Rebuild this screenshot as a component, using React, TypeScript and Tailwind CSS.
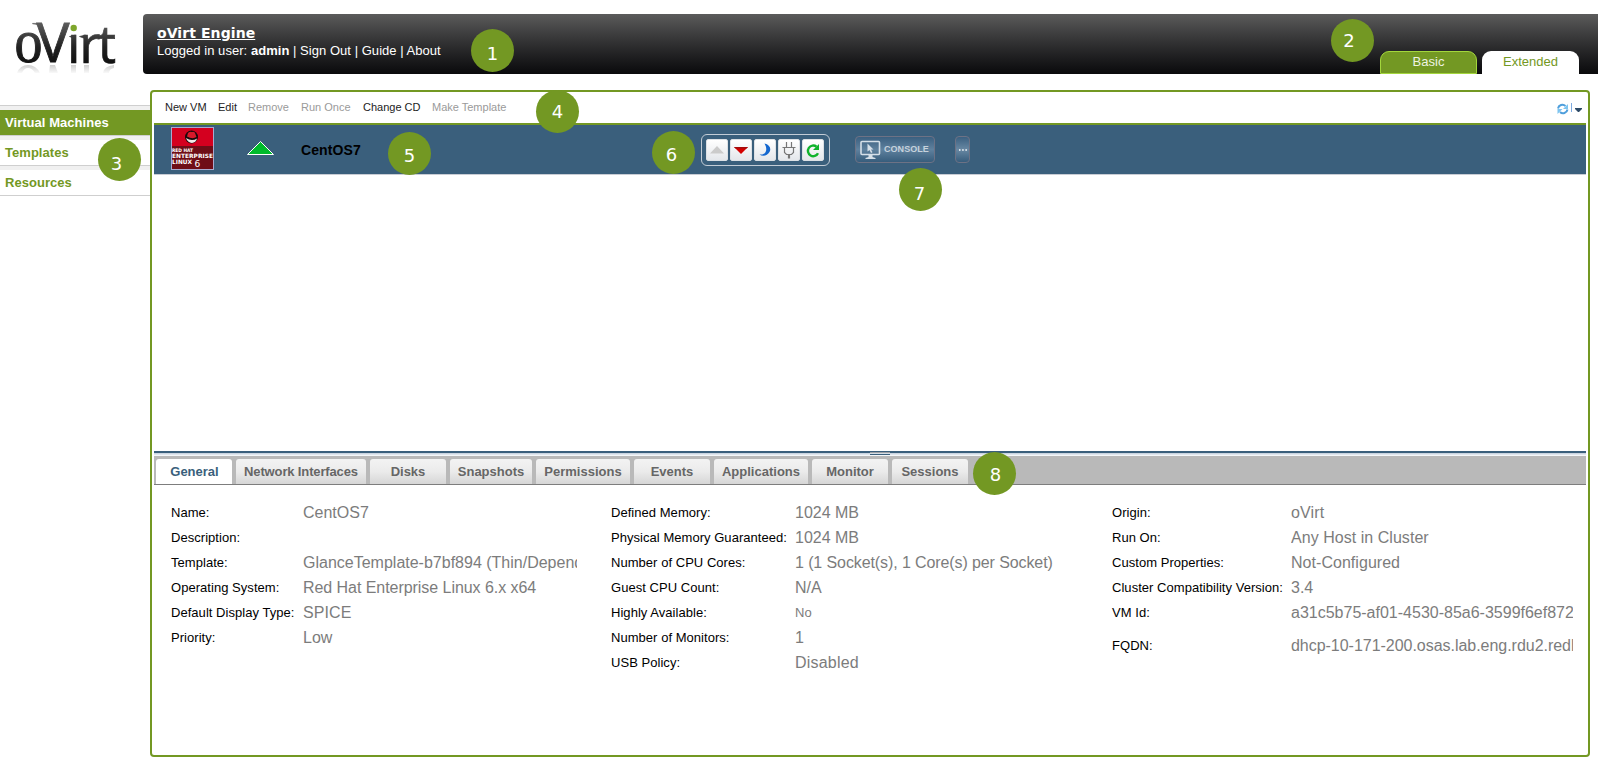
import type { ReactNode } from "react";

const menu: { label: string; enabled: boolean; width: string }[] = [
  { label: "New VM", enabled: true, width: "w-[53px]" },
  { label: "Edit", enabled: true, width: "w-[30px]" },
  { label: "Remove", enabled: false, width: "w-[53px]" },
  { label: "Run Once", enabled: false, width: "w-[62px]" },
  { label: "Change CD", enabled: true, width: "w-[69px]" },
  { label: "Make Template", enabled: false, width: "w-[90px]" },
];

const tabs: { label: string; width: string }[] = [
  { label: "General", width: "w-[76px]" },
  { label: "Network Interfaces", width: "w-[130px] tracking-[-0.14px]" },
  { label: "Disks", width: "w-[76px]" },
  { label: "Snapshots", width: "w-[82px]" },
  { label: "Permissions", width: "w-[94px]" },
  { label: "Events", width: "w-[76px]" },
  { label: "Applications", width: "w-[94px]" },
  { label: "Monitor", width: "w-[76px]" },
  { label: "Sessions", width: "w-[76px]" },
];

type Row = { label: string; value: string; small?: boolean; gap?: boolean; spacing?: string };

const general: Row[] = [
  { label: "Name:", value: "CentOS7" },
  { label: "Description:", value: "" },
  { label: "Template:", value: "GlanceTemplate-b7bf894 (Thin/Dependent)" },
  { label: "Operating System:", value: "Red Hat Enterprise Linux 6.x x64", spacing: "tracking-[-0.05px]" },
  { label: "Default Display Type:", value: "SPICE", spacing: "tracking-[0.1px]" },
  { label: "Priority:", value: "Low" },
];

const hardware: Row[] = [
  { label: "Defined Memory:", value: "1024 MB" },
  { label: "Physical Memory Guaranteed:", value: "1024 MB" },
  { label: "Number of CPU Cores:", value: "1 (1 Socket(s), 1 Core(s) per Socket)", spacing: "tracking-[-0.1px]" },
  { label: "Guest CPU Count:", value: "N/A" },
  { label: "Highly Available:", value: "No", small: true },
  { label: "Number of Monitors:", value: "1" },
  { label: "USB Policy:", value: "Disabled", spacing: "tracking-[0.2px]" },
];

const placement: Row[] = [
  { label: "Origin:", value: "oVirt", spacing: "tracking-[0.15px]" },
  { label: "Run On:", value: "Any Host in Cluster", spacing: "tracking-[0.04px]" },
  { label: "Custom Properties:", value: "Not-Configured", spacing: "tracking-[0.04px]" },
  { label: "Cluster Compatibility Version:", value: "3.4" },
  { label: "VM Id:", value: "a31c5b75-af01-4530-85a6-3599f6ef872" },
  { label: "FQDN:", value: "dhcp-10-171-200.osas.lab.eng.rdu2.redhat.com", gap: true, spacing: "tracking-[-0.03px]" },
];

const markers: { n: string; at: string; shift: string }[] = [
  { n: "1", at: "left-[471px] top-[29px]", shift: "pt-[6px]" },
  { n: "2", at: "left-[1331px] top-[19px]", shift: "pr-[7px]" },
  { n: "3", at: "left-[98px] top-[138px]", shift: "pr-[6px] pt-[8px]" },
  { n: "4", at: "left-[536px] top-[90px]", shift: "pt-[1px]" },
  { n: "5", at: "left-[388px] top-[132px]", shift: "pt-[4px]" },
  { n: "6", at: "left-[652px] top-[131px]", shift: "pr-[4px] pt-[4px]" },
  { n: "7", at: "left-[899px] top-[168px]", shift: "pr-[2px] pt-[8px]" },
  { n: "8", at: "left-[973px] top-[452px]", shift: "pt-[3px] pl-[2px]" },
];

function Logo() {
  return (
    <svg className="h-[90px] w-[143px] shrink-0 font-['Noto_Sans',sans-serif]" viewBox="0 0 143 90">
      <defs>
        <linearGradient id="ink" gradientUnits="userSpaceOnUse" x1="0" y1="23" x2="0" y2="63">
          <stop offset="0" stopColor="#5c5c5c" />
          <stop offset="0.6" stopColor="#222" />
          <stop offset="1" stopColor="#111" />
        </linearGradient>
        <linearGradient id="fade" gradientUnits="userSpaceOnUse" x1="0" y1="64" x2="0" y2="74">
          <stop offset="0" stopColor="#777" stopOpacity="0.4" />
          <stop offset="1" stopColor="#777" stopOpacity="0" />
        </linearGradient>
        <clipPath id="stem"><rect x="60" y="34" width="30" height="40" /></clipPath>
      </defs>
      <g fill="url(#ink)" stroke="url(#ink)" strokeWidth="0.7">
        <text className="font-['Liberation_Serif',serif]" x="14.500" y="62.300" textLength="28" lengthAdjust="spacingAndGlyphs" fontSize="61" strokeWidth="1">o</text>
        <text x="36.500" y="62.300" textLength="33" lengthAdjust="spacingAndGlyphs" fontSize="54.500" strokeWidth="0.8">V</text>
        <path d="M32.500 23.300h9l1.500 4-2.500.5c-1.500-2.500-4-3.500-8-3.800z" strokeWidth="0.3" />
        <g clipPath="url(#stem)">
          <text x="67" y="62.500" fontSize="52">i</text>
        </g>
        <path d="M69.500 36.500l6-1.500v3h-2zM79.500 36.500l6-1.500v3h-2z" />
        <text x="79.500" y="62.500" textLength="21" lengthAdjust="spacingAndGlyphs" fontSize="52">r</text>
        <text x="98" y="62.500" textLength="18" lengthAdjust="spacingAndGlyphs" fontSize="52">t</text>
      </g>
      <circle cx="73.700" cy="28" r="3.200" fill="#7ea62b" />
      <path d="M17 73q3-8 11-8t12 8h-5q-3-5-7-5t-6 5zM50 65h5l3 8h-9zM71 65h5v8h-5zM84 65h5v8h-5zM103 73q1-7 11-8v3q-5 1-5 5z" fill="url(#fade)" />
    </svg>
  );
}

function RhelLogo() {
  return (
    <svg className="h-[43px] w-[43px] shrink-0 font-['DejaVu_Sans',sans-serif]" viewBox="0 0 43 43">
      <rect width="43" height="43" fill="#a9a9cf" />
      <rect x="1" y="1" width="41" height="41" fill="#6f0d17" />
      <rect x="1" y="1" width="41" height="18" fill="#d4001f" />
      <circle cx="20.500" cy="10" r="6.500" fill="#17090a" />
      <path d="M15 11q3 2 6 2t5-1.500q-1 4-5 4.500-4.500-.5-6-5z" fill="#f4e9e8" />
      <path d="M16 9.500l1-3.500q2-2 4-1 2-1 3 1l1.500 4q-4 2.500-9.500-.5z" fill="#d8192b" />
      <g fill="#fff" fontWeight="700">
        <text x="1" y="25" fontSize="4.800" textLength="21" lengthAdjust="spacingAndGlyphs">RED HAT</text>
        <text x="1" y="30.800" fontSize="5.800" textLength="41" lengthAdjust="spacingAndGlyphs">ENTERPRISE</text>
        <text x="1" y="37" fontSize="5.800" textLength="20" lengthAdjust="spacingAndGlyphs">LINUX</text>
        <text x="23.500" y="39.500" fontSize="9" fontWeight="400">6</text>
      </g>
    </svg>
  );
}

function ActionButton({ children }: { children: ReactNode }) {
  return (
    <div className="h-[22px] w-[22px] rounded-[2px] border border-[#dde1e5] bg-gradient-to-b from-white to-[#e4e7eb]">
      <svg className="block h-5 w-5" viewBox="0 0 20 20">{children}</svg>
    </div>
  );
}

function Actions() {
  return (
    <div className="flex h-8 w-[129px] gap-0.5 rounded-[6px] border border-[#c3ccd6] pl-1 pt-1">
      <ActionButton><path d="M3 13.500L10 6l7 7.500z" fill="#cbcbcb" /></ActionButton>
      <ActionButton><path d="M3 7h14l-7 7z" fill="#d40000" /><path d="M3 7h14l-1.500 1.500h-11z" fill="#a30d0d" /></ActionButton>
      <ActionButton><path d="M9.500 3.500c5 1 7 5 5 8.500s-6.500 5-10 2.500c3 .2 5.500-.5 6.500-3.500.7-2.500 0-5-1.500-7.500z" fill="#1467cf" /></ActionButton>
      <ActionButton>
        <path d="M7.500 2v5M12.500 2v5M3.500 7.500h13M5.500 7.500v5l2 2h5l2-2v-5M9.500 14.500v4M10.500 14.500v4" fill="none" stroke="#777" strokeWidth="1.200" />
      </ActionButton>
      <ActionButton>
        <path d="M15 13.200a5.300 5.300 0 1 1-1.500-6.500" fill="none" stroke="#10b32c" strokeWidth="2.400" />
        <path d="M16 4v6h-6z" fill="#10b32c" />
      </ActionButton>
    </div>
  );
}

function DetailColumn({ rows, labelWidth, className }: { rows: Row[]; labelWidth: string; className: string }) {
  return (
    <div className={className}>
      {rows.map((r) => (
        <div key={r.label} className={`flex h-[25px] items-center ${r.gap ? "mt-2" : ""}`}>
          <div className={`shrink-0 whitespace-nowrap pt-px text-[13px] leading-[20px] tracking-[0.04px] text-black ${labelWidth}`}>{r.label}</div>
          <div className={`min-w-0 flex-1 overflow-hidden whitespace-nowrap leading-[20px] text-[#7c7c7c] ${r.spacing ?? ""} ${r.small ? "pt-px text-[13px]" : "text-[16px]"}`}>{r.value}</div>
        </div>
      ))}
    </div>
  );
}

function SideItem({ label, active }: { label: string; active?: boolean }) {
  return (
    <div className="border-t border-[#cfcfcf] bg-[#f0f0f0] pt-1">
      <div className={`h-[25px] pl-[5px] text-[13px] font-bold leading-[25px] tracking-[0.04px] ${active ? "bg-[#739823] text-white" : "bg-white text-[#739823]"}`}>{label}</div>
    </div>
  );
}

export default function App() {
  return (
    <div className="relative h-[772px] w-[1598px] overflow-hidden bg-white font-['Liberation_Sans',Arial,sans-serif]">
      <header className="flex h-[90px]">
        <Logo />
        <div className="mt-[14px] flex h-[60px] flex-1 justify-between rounded-l-[4px] bg-gradient-to-b from-[#5b5b5b] to-[#0a0a0c] pr-[19px]">
          <div className="pl-[14px] pt-[10px] text-white">
            <div className="font-['DejaVu_Sans',sans-serif] text-[14px] font-bold leading-[18px] tracking-[0.08px] underline">oVirt Engine</div>
            <div className="whitespace-nowrap text-[13px] leading-[17px] tracking-[0.04px]">
              Logged in user: <b>admin</b> | Sign Out | Guide | About
            </div>
          </div>
          <nav className="flex items-end gap-[5px] text-center text-[13px] leading-[20px]">
            <div className="h-[23px] w-[97px] rounded-t-[9px] border border-[#a3d63c] bg-[#739823] text-[#eef3e2]">Basic</div>
            <div className="h-[23px] w-[97px] rounded-t-[9px] bg-white pt-px text-[#739823]">Extended</div>
          </nav>
        </div>
      </header>

      <div className="flex">
        <aside className="w-[150px] shrink-0 pt-[15px]">
          <SideItem label="Virtual Machines" active />
          <SideItem label="Templates" />
          <SideItem label="Resources" />
          <div className="h-px bg-[#cfcfcf]" />
        </aside>

        <main className="flex h-[667px] w-[1440px] flex-col rounded-[4px] border-2 border-[#739823] px-0.5">
          <div className="flex h-[33px] shrink-0 items-start border-b-2 border-[#739823] pl-[11px] pt-[7px] text-[11px] leading-[16px]">
            {menu.map((m) => (
              <div key={m.label} className={`whitespace-nowrap ${m.width} ${m.enabled ? "text-[#222]" : "text-[#9a9a9a]"}`}>{m.label}</div>
            ))}
            <svg className="ml-auto mr-[3px] mt-[3px] h-[14px] w-[27px]" viewBox="0 0 27 14">
              <path d="M2 6.500a4.500 4.500 0 0 1 7.500-2.500" fill="none" stroke="#4f9fdc" strokeWidth="2" />
              <path d="M12 2v5H7z" fill="#7cc4f0" />
              <path d="M11.500 7.500a4.500 4.500 0 0 1-7.500 2.500" fill="none" stroke="#4f9fdc" strokeWidth="2" />
              <path d="M1.500 12V7h5z" fill="#7cc4f0" />
              <path d="M15.500 1v9" stroke="#7fabe0" />
              <path d="M19 6h7v1l-3 3h-1l-3-3z" fill="#2d4a66" />
            </svg>
          </div>

          <section className="flex h-[50px] shrink-0 items-start border-b border-[#c8ccd4] bg-[#3a5f7c] pl-[17px]">
            <div className="pt-[2px]"><RhelLogo /></div>
            <svg className="ml-[32px] mt-[15px] h-[16px] w-[29px]" viewBox="0 0 29 16">
              <path d="M1.500 14.500L14.500 1.500l13 13z" fill="#00ba2c" stroke="#fff" strokeWidth="1" />
            </svg>
            <div className="ml-[26px] w-[400px] pt-[15px] text-[14px] font-bold leading-[20px] tracking-[0.1px] text-black">CentOS7</div>
            <div className="pt-[9px]"><Actions /></div>
            <div className="ml-[25px] mt-[11px] flex h-[27px] w-[80px] items-center rounded-[4px] border border-[#6d7285] bg-gradient-to-b from-[#3b6080] via-[#5f819e] to-[#375d7c] pl-1">
              <svg className="h-[20px] w-[21px]" viewBox="0 0 21 20">
                <rect x="1" y="1.500" width="18.500" height="13" rx="1" fill="none" stroke="#d5dfe8" strokeWidth="1.600" />
                <path d="M7.500 3.500v8l2-1.500 1.500 3 1.500-.8-1.500-2.700h2.500z" fill="#d5dfe8" />
                <path d="M8.500 15h4v2l3 1v1h-10v-1l3-1z" fill="#d5dfe8" />
              </svg>
              <span className="ml-[3px] text-[9px] font-bold leading-none tracking-[0.05px] text-[#c6d2dd]">CONSOLE</span>
            </div>
            <div className="ml-[20px] mt-[11px] flex h-[27px] w-[15px] items-center justify-center rounded-[4px] border border-[#6d7285] bg-gradient-to-b from-[#3b6080] via-[#6888a3] to-[#375d7c]">
              <svg className="mt-px h-[2px] w-[8px]" viewBox="0 0 8 2"><path d="M0 1h1.500M3.200 1h1.500M6.400 1h1.500" stroke="#fff" strokeWidth="1.500" /></svg>
            </div>
          </section>

          <div className="h-[276px] shrink-0" />
          <div className="flex h-[5px] shrink-0 justify-center border-t-2 border-[#3a5f7c] bg-gradient-to-b from-[#c0cddb] to-white">
            <div className="-mt-px ml-[20px] h-[3px] w-[20px] shrink-0 border-b border-t border-b-[#3a5f7c] border-t-[#9a9fa5] bg-[#3a5f7c]">
              <div className="h-px bg-[#d5dde5]" />
            </div>
          </div>

          <div className="flex h-[29px] shrink-0 items-end border-b border-[#7d7d7d] bg-[#b9b9b9] pl-[2px]">
            {tabs.map((t, i) => (
              <div key={t.label} className={`mr-1 h-[25px] shrink-0 whitespace-nowrap rounded-t-[3px] text-center text-[13px] font-bold leading-[25px] ${t.width} ${i === 0 ? "bg-white pl-px text-[#3a5f7c]" : "bg-gradient-to-b from-[#f3f3f3] via-[#ebebeb] to-[#d6d6d6] text-[#666]"}`}>{t.label}</div>
            ))}
          </div>

          <div className="flex pl-[17px] pt-[15px]">
            <DetailColumn rows={general} labelWidth="w-[132px]" className="mr-[34px] w-[406px]" />
            <DetailColumn rows={hardware} labelWidth="w-[184px]" className="mr-[34px] w-[467px]" />
            <DetailColumn rows={placement} labelWidth="w-[179px]" className="w-[461px]" />
          </div>
        </main>
      </div>

      {markers.map((m) => (
        <div key={m.n} className={`absolute flex h-[43px] w-[43px] items-center justify-center rounded-full bg-[#739823] font-['DejaVu_Sans',sans-serif] text-[18px] leading-none text-white ${m.at} ${m.shift}`}>{m.n}</div>
      ))}
    </div>
  );
}
